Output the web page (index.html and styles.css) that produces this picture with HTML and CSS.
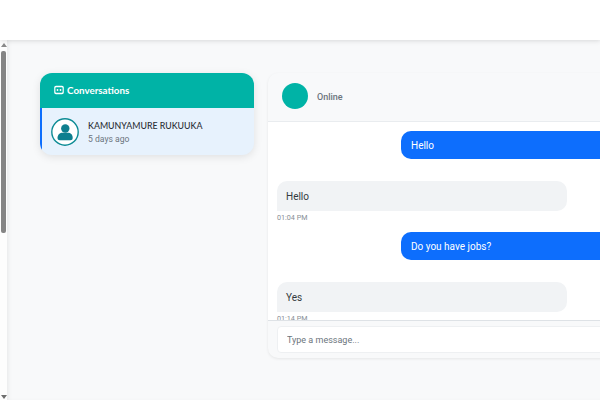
FILE: index.html
```html
<!DOCTYPE html>
<html lang="en">
  <head>
    <meta charset="UTF-8" />
    <meta name="viewport" content="width=device-width, initial-scale=1.0" />
    <title>Messages</title>
    <link rel="stylesheet" href="styles.css">
  </head>
  <body>
    <div class="topbar"></div>
    <div class="page">
      <div class="scrollbar">
        <div class="arrow-up"></div>
        <div class="thumb"></div>
        <div class="arrow-down"></div>
      </div>
      <div class="main">
        <div class="sidebar">
          <div class="side-head">
            <svg class="chat-icon" width="10" height="10" viewBox="0 0 10 10">
              <path fill="#fff" fill-rule="evenodd" d="M2 .8h6A1.8 1.8 0 0 1 9.8 2.600v4.800A1.8 1.8 0 0 1 8 9.200H2A1.800 1.800 0 0 1 .2 7.400V2.600A1.800 1.800 0 0 1 2 .8zm.2 1.500a.8.8 0 0 0-.8.8v3.800a.8.8 0 0 0 .8.8h5.600a.8.8 0 0 0 .8-.8V3.100a.8.8 0 0 0-.8-.8z"/>
              <circle cx="3.500" cy="5" r=".9" fill="#fff"/>
              <circle cx="6.500" cy="5" r=".9" fill="#fff"/>
            </svg>
            <span>Conversations</span>
          </div>
          <div class="contact">
            <svg class="contact-pic" width="28" height="28" viewBox="0 0 28 28">
              <circle cx="14" cy="14" r="13.200" fill="#fff" stroke="#0e8c95" stroke-width="1.400"/>
              <circle cx="14.300" cy="10.500" r="4.200" fill="#0e7f8f"/>
              <path fill="#0e7f8f" d="M6.500 20c0-3.500 2.500-5.200 5-5.200h5.500c2.500 0 4.700 1.700 4.700 5.200 0 1.500-1 2.200-2.200 2.200H8.700c-1.200 0-2.200-.7-2.200-2.200z"/>
            </svg>
            <div>
              <div class="contact-name">KAMUNYAMURE RUKUUKA</div>
              <div class="contact-time">5 days ago</div>
            </div>
          </div>
        </div>
        <div class="chat">
          <div class="chat-head">
            <div class="chat-pic"></div>
            <div class="status">Online</div>
          </div>
          <div class="msgs">
            <div class="msg-me">Hello</div>
            <div class="msg-other">Hello</div>
            <div class="msg-time">01:04 PM</div>
            <div class="msg-me">Do you have jobs?</div>
            <div class="msg-other">Yes</div>
            <div class="msg-time">01:14 PM</div>
          </div>
          <div class="chat-foot">
            <input class="msg-input" type="text" placeholder="Type a message..." />
          </div>
        </div>
      </div>
    </div>
  </body>
</html>
```

FILE: styles.css
```css
* {
  box-sizing: border-box;
}
body {
  margin: 0;
  width: 600px;
  height: 400px;
  overflow: hidden;
  background-color: white;
  font-family: Roboto, "Noto Sans", sans-serif;
  color: #343a40;
}
.topbar {
  position: relative;
  height: 40px;
  background-color: white;
  box-shadow: 0 1px 5px rgba(0, 0, 0, 0.12);
}
.page {
  display: flex;
  height: 360px;
}
.scrollbar {
  width: 7px;
  flex-shrink: 0;
  background-color: #fdfdfd;
  display: flex;
  flex-direction: column;
  align-items: center;
}
.arrow-up {
  width: 0;
  height: 0;
  margin-top: 3px;
  border-left: 3px solid transparent;
  border-right: 3px solid transparent;
  border-bottom: 4px solid #8a8a8a;
}
.thumb {
  width: 5px;
  height: 182px;
  margin-top: 4px;
  margin-left: -1px;
  background-color: #858585;
  border-radius: 2px;
}
.arrow-down {
  width: 0;
  height: 0;
  margin-top: auto;
  margin-bottom: 1px;
  border-left: 3px solid transparent;
  border-right: 3px solid transparent;
  border-top: 4px solid #6e6e6e;
}
.main {
  flex: 1;
  display: flex;
  align-items: flex-start;
  gap: 14px;
  padding: 33px 0 0 33px;
  background-color: #f8f9fa;
  overflow: hidden;
  box-shadow: inset 3px 0 4px -2px rgba(0, 0, 0, 0.08);
}
.sidebar {
  width: 214px;
  flex-shrink: 0;
  border-radius: 12px;
  overflow: hidden;
  background-color: #e7f2fd;
  box-shadow: 0 2px 8px rgba(0, 0, 0, 0.1);
}
.side-head {
  height: 35px;
  display: flex;
  align-items: center;
  gap: 3px;
  padding: 0 0 1px 14px;
  background-color: #00b3a6;
  color: white;
  font-family: "Lato", sans-serif;
  font-size: 9.8px;
  font-weight: 700;
}
.contact {
  height: 47px;
  display: flex;
  align-items: center;
  gap: 9px;
  padding-left: 9px;
  border-left: 2px solid #0d6efd;
}
.contact-name {
  font-family: "Lato", sans-serif;
  font-size: 8.8px;
  font-weight: 500;
  color: #2b3036;
}
.contact-time {
  margin-top: 3px;
  font-size: 8.6px;
  color: #6c757d;
}
.chat {
  width: 400px;
  height: 285px;
  flex-shrink: 0;
  display: flex;
  flex-direction: column;
  border-radius: 10px 0 0 10px;
  overflow: hidden;
  background-color: #f8f9fa;
  box-shadow: 0 1px 3px rgba(0, 0, 0, 0.08);
}
.chat-head {
  height: 49px;
  flex-shrink: 0;
  display: flex;
  align-items: center;
  gap: 9px;
  padding: 0 0 2px 14px;
  border-bottom: 1px solid #e9ecef;
}
.chat-pic {
  width: 26px;
  height: 26px;
  border-radius: 50%;
  background-color: #00b3a6;
}
.status {
  margin-top: 2px;
  font-size: 9px;
  font-weight: 500;
  color: #6c757d;
}
.msgs {
  flex: 1;
  overflow: hidden;
  padding: 9px 9px 0;
  background-color: white;
  font-size: 10px;
}
.msg-me {
  width: 290px;
  height: 28px;
  margin-left: 124px;
  margin-bottom: 22px;
  padding-left: 10px;
  line-height: 29px;
  border-radius: 10px;
  background-color: #0d6efd;
  color: white;
}
.msg-other {
  width: 290px;
  height: 30px;
  padding-left: 9px;
  line-height: 31px;
  border-radius: 10px 10px 10px 0;
  background-color: #f1f3f5;
}
.msg-time {
  height: 19px;
  margin-top: 2px;
  line-height: 10px;
  font-size: 7.2px;
  color: #868e96;
}
.chat-foot {
  height: 38px;
  flex-shrink: 0;
  padding: 5px 0 0 9px;
  border-top: 1px solid #dee2e6;
}
.msg-input {
  display: block;
  width: 100%;
  height: 27px;
  padding: 0 9px;
  border: 1px solid #eef0f2;
  border-radius: 4px;
  background-color: white;
  font-family: inherit;
  font-size: 9px;
}
.msg-input::placeholder {
  color: #6c757d;
}
```
